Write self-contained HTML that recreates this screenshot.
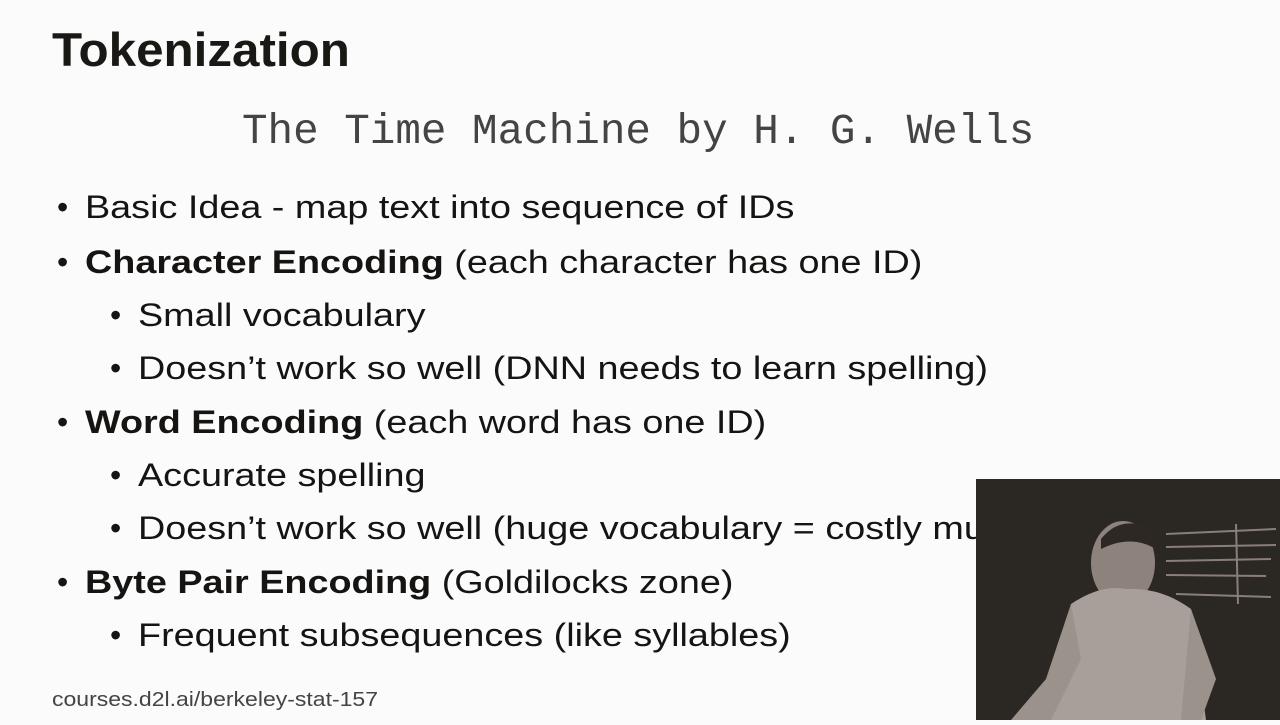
<!DOCTYPE html>
<html><head><meta charset="utf-8"><style>
html,body{margin:0;padding:0}
body{width:1280px;height:720px;background:#fbfbfb;position:relative;overflow:hidden;font-family:"Liberation Sans",Arial,sans-serif;color:#111}
h1{position:absolute;left:52px;top:22px;margin:0;font-size:47px;font-weight:bold;color:#1a1814;transform:scaleX(1.05);transform-origin:left;white-space:nowrap}
.mono{position:absolute;left:242px;top:108px;font-family:"Liberation Mono",monospace;font-size:42.6px;color:#444;white-space:nowrap}
.l{position:absolute;font-size:32px;white-space:nowrap;line-height:40px;color:#161412}
.x1,.x2{transform:scaleX(1.18);transform-origin:left}
.b1{left:57px}.x1{left:85px}
.b2{left:110px}.x2{left:138px}
.foot{position:absolute;left:52px;top:689px;font-size:20px;color:#444;transform:scaleX(1.15);transform-origin:left;white-space:nowrap}
#vid{position:absolute;left:976px;top:479px;width:304px;height:241px;background:#2b2723}
</style></head><body>
<h1>Tokenization</h1>
<div class="mono">The Time Machine by H. G. Wells</div>

<div class="l b1" style="top:187px">•</div><div class="l x1" style="top:187px">Basic Idea - map text into sequence of IDs</div>
<div class="l b1" style="top:242px">•</div><div class="l x1" style="top:242px"><b>Character Encoding</b> (each character has one ID)</div>
<div class="l b2" style="top:295px">•</div><div class="l x2" style="top:295px">Small vocabulary</div>
<div class="l b2" style="top:348px">•</div><div class="l x2" style="top:348px">Doesn’t work so well (DNN needs to learn spelling)</div>
<div class="l b1" style="top:402px">•</div><div class="l x1" style="top:402px"><b>Word Encoding</b> (each word has one ID)</div>
<div class="l b2" style="top:455px">•</div><div class="l x2" style="top:455px">Accurate spelling</div>
<div class="l b2" style="top:508px">•</div><div class="l x2" style="top:508px">Doesn’t work so well (huge vocabulary = costly multinomial)</div>
<div class="l b1" style="top:562px">•</div><div class="l x1" style="top:562px"><b>Byte Pair Encoding</b> (Goldilocks zone)</div>
<div class="l b2" style="top:615px">•</div><div class="l x2" style="top:615px">Frequent subsequences (like syllables)</div>

<div class="foot">courses.d2l.ai/berkeley-stat-157</div>

<div id="vid"><svg width="304" height="241" viewBox="0 0 304 241">
<g stroke="#8a7f78" stroke-width="2" fill="none">
<line x1="190" y1="55" x2="300" y2="50"/><line x1="190" y1="68" x2="300" y2="66"/>
<line x1="190" y1="82" x2="295" y2="80"/><line x1="190" y1="96" x2="290" y2="97"/>
<line x1="200" y1="115" x2="295" y2="118"/><line x1="260" y1="45" x2="262" y2="125"/>
</g>
<g transform="translate(-25,0)">
<ellipse cx="172" cy="84" rx="32" ry="42" fill="#8e837c"/>
<path d="M150 60 Q170 35 200 50 L205 70 Q180 55 150 70Z" fill="#2e2824"/>
<path d="M120 125 Q150 105 175 110 Q210 108 240 130 L255 241 L100 241 Z" fill="#a89f9a"/>
<path d="M120 125 L95 200 L60 241 L100 241 L130 180Z" fill="#9c928c"/>
<path d="M240 130 L265 200 L250 241 L230 241Z" fill="#9c928c"/>
</g>
</svg></div>
</body></html>
